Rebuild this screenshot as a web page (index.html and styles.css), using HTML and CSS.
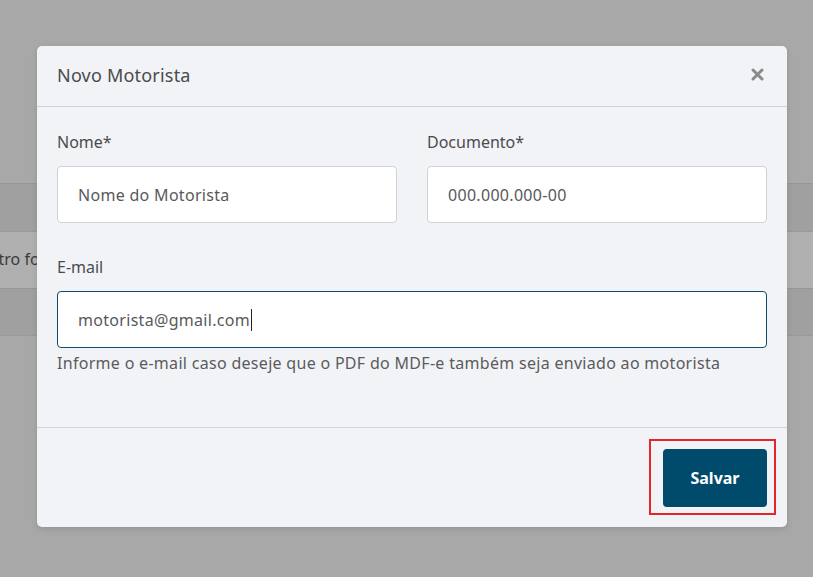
FILE: index.html
```html
<!DOCTYPE html>
<html lang="pt-BR">
<head>
<meta charset="utf-8">
<title>Novo Motorista</title>
<link rel="stylesheet" href="styles.css">
</head>
<body>
<div class="page">
  <div class="band band-top"></div>
  <div class="band band-dark"></div>
  <div class="band band-light"><span class="bg-text">Filtro for</span></div>
  <div class="band band-dark"></div>
</div>
<div class="backdrop">
  <div class="modal">
    <div class="modal-header">
      <h2 class="modal-title">Novo Motorista</h2>
      <span class="close" aria-label="Fechar">
        <svg width="13" height="13" viewBox="0 0 13 13"><path d="M2 2 L11 11 M11 2 L2 11" stroke="#8a8a8c" stroke-width="3" stroke-linecap="round"/></svg>
      </span>
    </div>
    <div class="modal-body">
      <div class="row">
        <div class="field">
          <label class="label">Nome*</label>
          <div class="input">Nome do Motorista</div>
        </div>
        <div class="field">
          <label class="label">Documento*</label>
          <div class="input">000.000.000-00</div>
        </div>
      </div>
      <div class="field field-email">
        <label class="label">E-mail</label>
        <div class="input input-focus">motorista@gmail.com<span class="caret"></span></div>
        <p class="help">Informe o e-mail caso deseje que o PDF do MDF-e também seja enviado ao motorista</p>
      </div>
    </div>
    <div class="modal-footer">
      <div class="highlight">
        <button class="btn">Salvar</button>
      </div>
    </div>
  </div>
</div>
</body>
</html>
```
FILE: styles.css
```css
* { box-sizing: border-box; }
html, body { margin: 0; padding: 0; }
body {
  width: 813px;
  height: 577px;
  overflow: hidden;
  background: #a8a8a9;
  font-family: "Noto Sans", "Open Sans", sans-serif;
  position: relative;
}
.page { display: flex; flex-direction: column; }
.band-top { height: 183px; }
.band-dark { height: 48px; background: #a0a0a1; border-top: 1px solid #979798; }
.band-light { height: 57px; background: #b0b0b0; border-top: 1px solid #999; display: flex; align-items: center; overflow: hidden; }
.bg-text { font-size: 16px; color: #3b3b3b; margin-left: -18px; margin-top: -3px; white-space: nowrap; }
.band-dark:last-child { border-bottom: 1px solid #999; }

.backdrop {
  position: absolute;
  inset: 0;
  padding-top: 46px;
  padding-left: 37px;
}
.modal {
  width: 750px;
  height: 481px;
  background: #f2f3f7;
  border-radius: 5px;
  box-shadow: 0 2px 6px rgba(0,0,0,0.12);
  display: flex;
  flex-direction: column;
}
.modal-header {
  height: 61px;
  border-bottom: 1px solid #d2d3d6;
  display: flex;
  align-items: center;
  justify-content: space-between;
  padding: 0 23px 3px 20px;
}
.modal-title {
  margin: 0;
  font-size: 18px;
  font-weight: 400;
  color: #4a4b4d;
  letter-spacing: 0.2px;
}
.close { display: flex; align-items: center; }
.modal-body {
  padding: 24px 20px 0 20px;
  height: 321px;
  border-bottom: 1px solid #d2d3d6;
}
.row { display: flex; gap: 30px; }
.row .field { flex: 1; }
.label {
  display: block;
  font-size: 16px;
  color: #4a4b4d;
  line-height: 22px;
  margin-bottom: 13px;
}
.input {
  height: 57px;
  background: #fff;
  border: 1px solid #cfd2d6;
  border-radius: 4px;
  display: flex;
  align-items: center;
  padding: 0 20px;
  font-size: 16px;
  color: #58595b;
  letter-spacing: 0.3px;
}
.input-focus { border-color: #0f4b6b; }
.caret { display: inline-block; width: 1px; height: 22px; background: #222; margin-left: 1px; }
.field-email { margin-top: 33px; }
.help {
  margin: 4px 0 0 0;
  font-size: 16px;
  color: #5a5b5d;
  line-height: 22px;
  letter-spacing: 0.3px;
}
.modal-footer {
  flex: 1;
  display: flex;
  justify-content: flex-end;
  align-items: flex-start;
  padding: 11px 11px 0 0;
}
.highlight {
  border: 2px solid #e3262a;
  padding: 8px 7px 6px 12px;
}
.btn {
  width: 104px;
  height: 58px;
  border: 0;
  border-radius: 4px;
  background: #004b6b;
  color: #fff;
  font-family: inherit;
  font-size: 16px;
  font-weight: 700;
}
```
